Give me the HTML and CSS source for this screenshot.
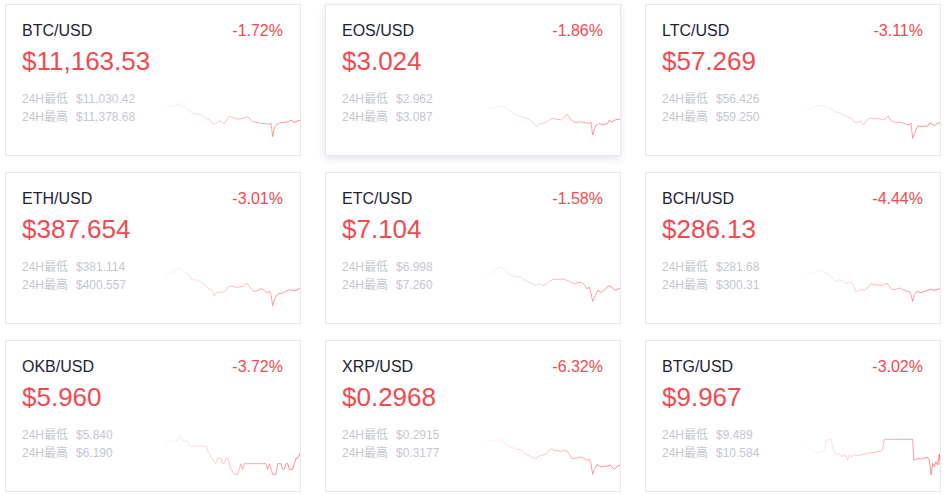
FILE: index.html
```html
<!DOCTYPE html>
<html lang="zh">
<head>
  <meta charset="UTF-8" />
  <title>Tickers</title>
  <link rel="stylesheet" href="styles.css">
</head>
<body>

<div class="grid" id="grid"></div>

<script>
  const tickers = [
    { pair: "BTC/USD", change: "-1.72%", price: "$11,163.53", low: "$11,030.42", high: "$11,378.68",
      line: "10,57 18,52 30,48 45,46 57,44 65,48 75,55 85,62 95,70 105,72 115,72 125,76 135,85 145,90 160,103 168,97 175,93 182,96 185,100 192,98 205,78 218,84 230,87 245,85 260,80 268,88 275,95 290,97 300,100 312,101 325,103 330,100 335,140 340,115 345,105 355,100 360,98 372,97 382,95 390,90 400,97 410,93 418,90" },
    { pair: "EOS/USD", change: "-1.86%", price: "$3.024", low: "$2.962", high: "$3.087", active: true,
      line: "15,57 35,55 55,48 65,50 75,55 90,65 100,73 115,78 130,83 145,88 150,92 158,100 165,110 172,104 180,100 190,99 195,97 205,90 215,85 228,88 240,90 250,82 258,73 265,82 270,90 280,96 285,98 295,96 300,95 312,98 325,100 330,97 335,135 340,120 345,105 352,103 355,100 362,104 370,103 380,100 385,90 390,96 395,95 403,90 410,88 418,88" },
    { pair: "LTC/USD", change: "-3.11%", price: "$57.269", low: "$56.426", high: "$59.250",
      line: "10,57 25,58 40,52 55,46 68,47 80,52 95,60 110,68 120,70 130,76 145,82 155,87 160,96 170,98 180,94 187,105 195,95 205,84 220,86 235,86 245,90 255,85 262,78 270,92 280,97 300,97 312,102 325,104 330,100 335,145 345,120 350,108 360,109 380,108 385,100 393,102 400,107 410,100 418,98" },
    { pair: "ETH/USD", change: "-3.01%", price: "$387.654", low: "$381.114", high: "$400.557",
      line: "10,57 20,42 30,44 40,38 55,30 65,36 75,45 85,55 95,66 110,66 120,74 130,78 140,90 155,98 160,115 165,105 175,102 185,103 195,97 205,84 215,85 225,88 235,87 245,85 258,76 265,85 275,97 282,100 290,97 300,92 310,96 318,105 325,100 330,110 335,143 342,120 350,108 360,106 368,104 375,100 385,95 395,97 405,97 418,90" },
    { pair: "ETC/USD", change: "-1.58%", price: "$7.104", low: "$6.998", high: "$7.260",
      line: "10,52 25,47 40,38 55,28 70,33 80,45 90,52 100,55 110,55 120,58 135,69 150,75 165,82 175,77 185,82 195,79 205,70 215,65 225,64 245,63 255,66 265,70 275,75 285,77 290,73 300,74 310,80 318,92 325,88 330,105 335,130 342,115 350,97 360,103 370,97 380,85 387,84 395,90 402,97 410,93 418,92" },
    { pair: "BCH/USD", change: "-4.44%", price: "$286.13", low: "$281.68", high: "$300.31",
      line: "10,50 22,45 35,48 45,40 55,37 65,40 75,44 85,50 95,60 105,70 115,65 125,68 135,77 145,73 155,77 165,102 172,97 180,95 190,97 200,90 210,77 220,80 230,81 240,83 250,80 257,75 265,85 275,95 285,94 295,90 305,94 315,99 325,100 330,110 335,130 340,110 348,100 360,104 370,100 380,97 390,94 400,97 410,94 418,92" },
    { pair: "OKB/USD", change: "-3.72%", price: "$5.960", low: "$5.840", high: "$6.190",
      line: "5,60 12,60 20,45 48,45 52,32 58,30 62,42 68,45 80,45 85,60 135,60 140,75 145,80 150,95 155,98 160,108 165,113 170,97 180,97 185,113 190,113 195,97 200,97 205,113 210,130 220,145 230,145 235,128 240,113 245,130 250,113 315,113 320,130 325,113 330,130 335,145 345,145 350,113 360,113 365,130 370,130 375,113 380,113 385,130 395,130 400,113 405,97 410,97 418,80" },
    { pair: "XRP/USD", change: "-6.32%", price: "$0.2968", low: "$0.2915", high: "$0.3177",
      line: "10,42 25,45 40,45 55,40 65,47 75,55 85,62 95,65 105,70 115,70 125,75 135,85 145,90 155,95 165,97 175,90 185,87 195,85 205,72 212,68 220,74 230,73 240,77 250,72 258,75 265,85 272,97 280,97 290,96 300,93 310,98 318,103 325,100 330,112 335,145 340,130 348,115 355,120 363,123 370,121 380,120 388,117 395,125 400,130 410,120 418,117" },
    { pair: "BTG/USD", change: "-3.02%", price: "$9.967", low: "$9.489", high: "$10.584",
      line: "10,57 20,62 30,72 45,80 60,79 70,70 75,42 85,42 90,40 95,62 100,82 105,87 115,82 120,92 130,87 135,90 140,102 145,87 150,92 160,87 175,88 190,84 210,80 225,78 240,76 245,70 250,40 335,40 338,102 350,98 365,98 380,94 385,102 390,147 395,112 400,122 405,107 410,117 415,84 418,120 420,117" }
  ];

  const grid = document.getElementById('grid');
  grid.innerHTML = tickers.map((t, i) => `
    <div class="card${t.active ? ' active' : ''}">
      <div class="head">
        <span class="pair">${t.pair}</span>
        <span class="change">${t.change}</span>
      </div>
      <div class="price">${t.price}</div>
      <div class="foot">
        <div class="stats">
          <p><span class="label">24H最低</span>${t.low}</p>
          <p><span class="label">24H最高</span>${t.high}</p>
        </div>
        <svg class="spark" width="136" height="45" viewBox="9 24 408 135">
          <defs>
            <linearGradient id="fade${i}" gradientUnits="userSpaceOnUse" x1="9" y1="0" x2="418" y2="0">
              <stop offset="0" stop-color="#f5474f" stop-opacity="0.05"/>
              <stop offset="1" stop-color="#f5474f" stop-opacity="0.65"/>
            </linearGradient>
          </defs>
          <polyline points="${t.line}" fill="none" stroke="url(#fade${i})" stroke-width="3" stroke-linejoin="round"/>
        </svg>
      </div>
    </div>
  `).join('');
</script>

</body>
</html>
```

FILE: styles.css
```css
body { margin: 0; background: #fff; font-family: "Liberation Sans", "Noto Sans CJK SC", Arial, sans-serif; }

.grid {
  display: grid;
  grid-template-columns: repeat(3, 296px);
  column-gap: 24px;
  row-gap: 16px;
  padding: 4px 0 0 5px;
}

.card {
  box-sizing: border-box;
  height: 152px;
  padding: 15px 17px 0 16px;
  border: 1px solid #e7e8ef;
  background: #fff;
  overflow: hidden;
}
.card.active { box-shadow: 0 3px 8px rgba(30, 40, 80, 0.12); }

.head { display: flex; justify-content: space-between; line-height: 22px; font-size: 16px; }
.pair { color: #1e2235; }
.change { color: #f04a50; }

.price { margin-top: 3px; font-size: 26px; line-height: 32px; color: #f04a50; }

.foot { display: flex; justify-content: space-between; align-items: flex-start; margin-top: 13px; }
.stats p { margin: 0; font-size: 12px; line-height: 18px; color: #c4c7d0; white-space: nowrap; }
.label { margin-right: 8px; }
.spark { display: block; flex: none; margin: 8px -17px 0 0; }
```
